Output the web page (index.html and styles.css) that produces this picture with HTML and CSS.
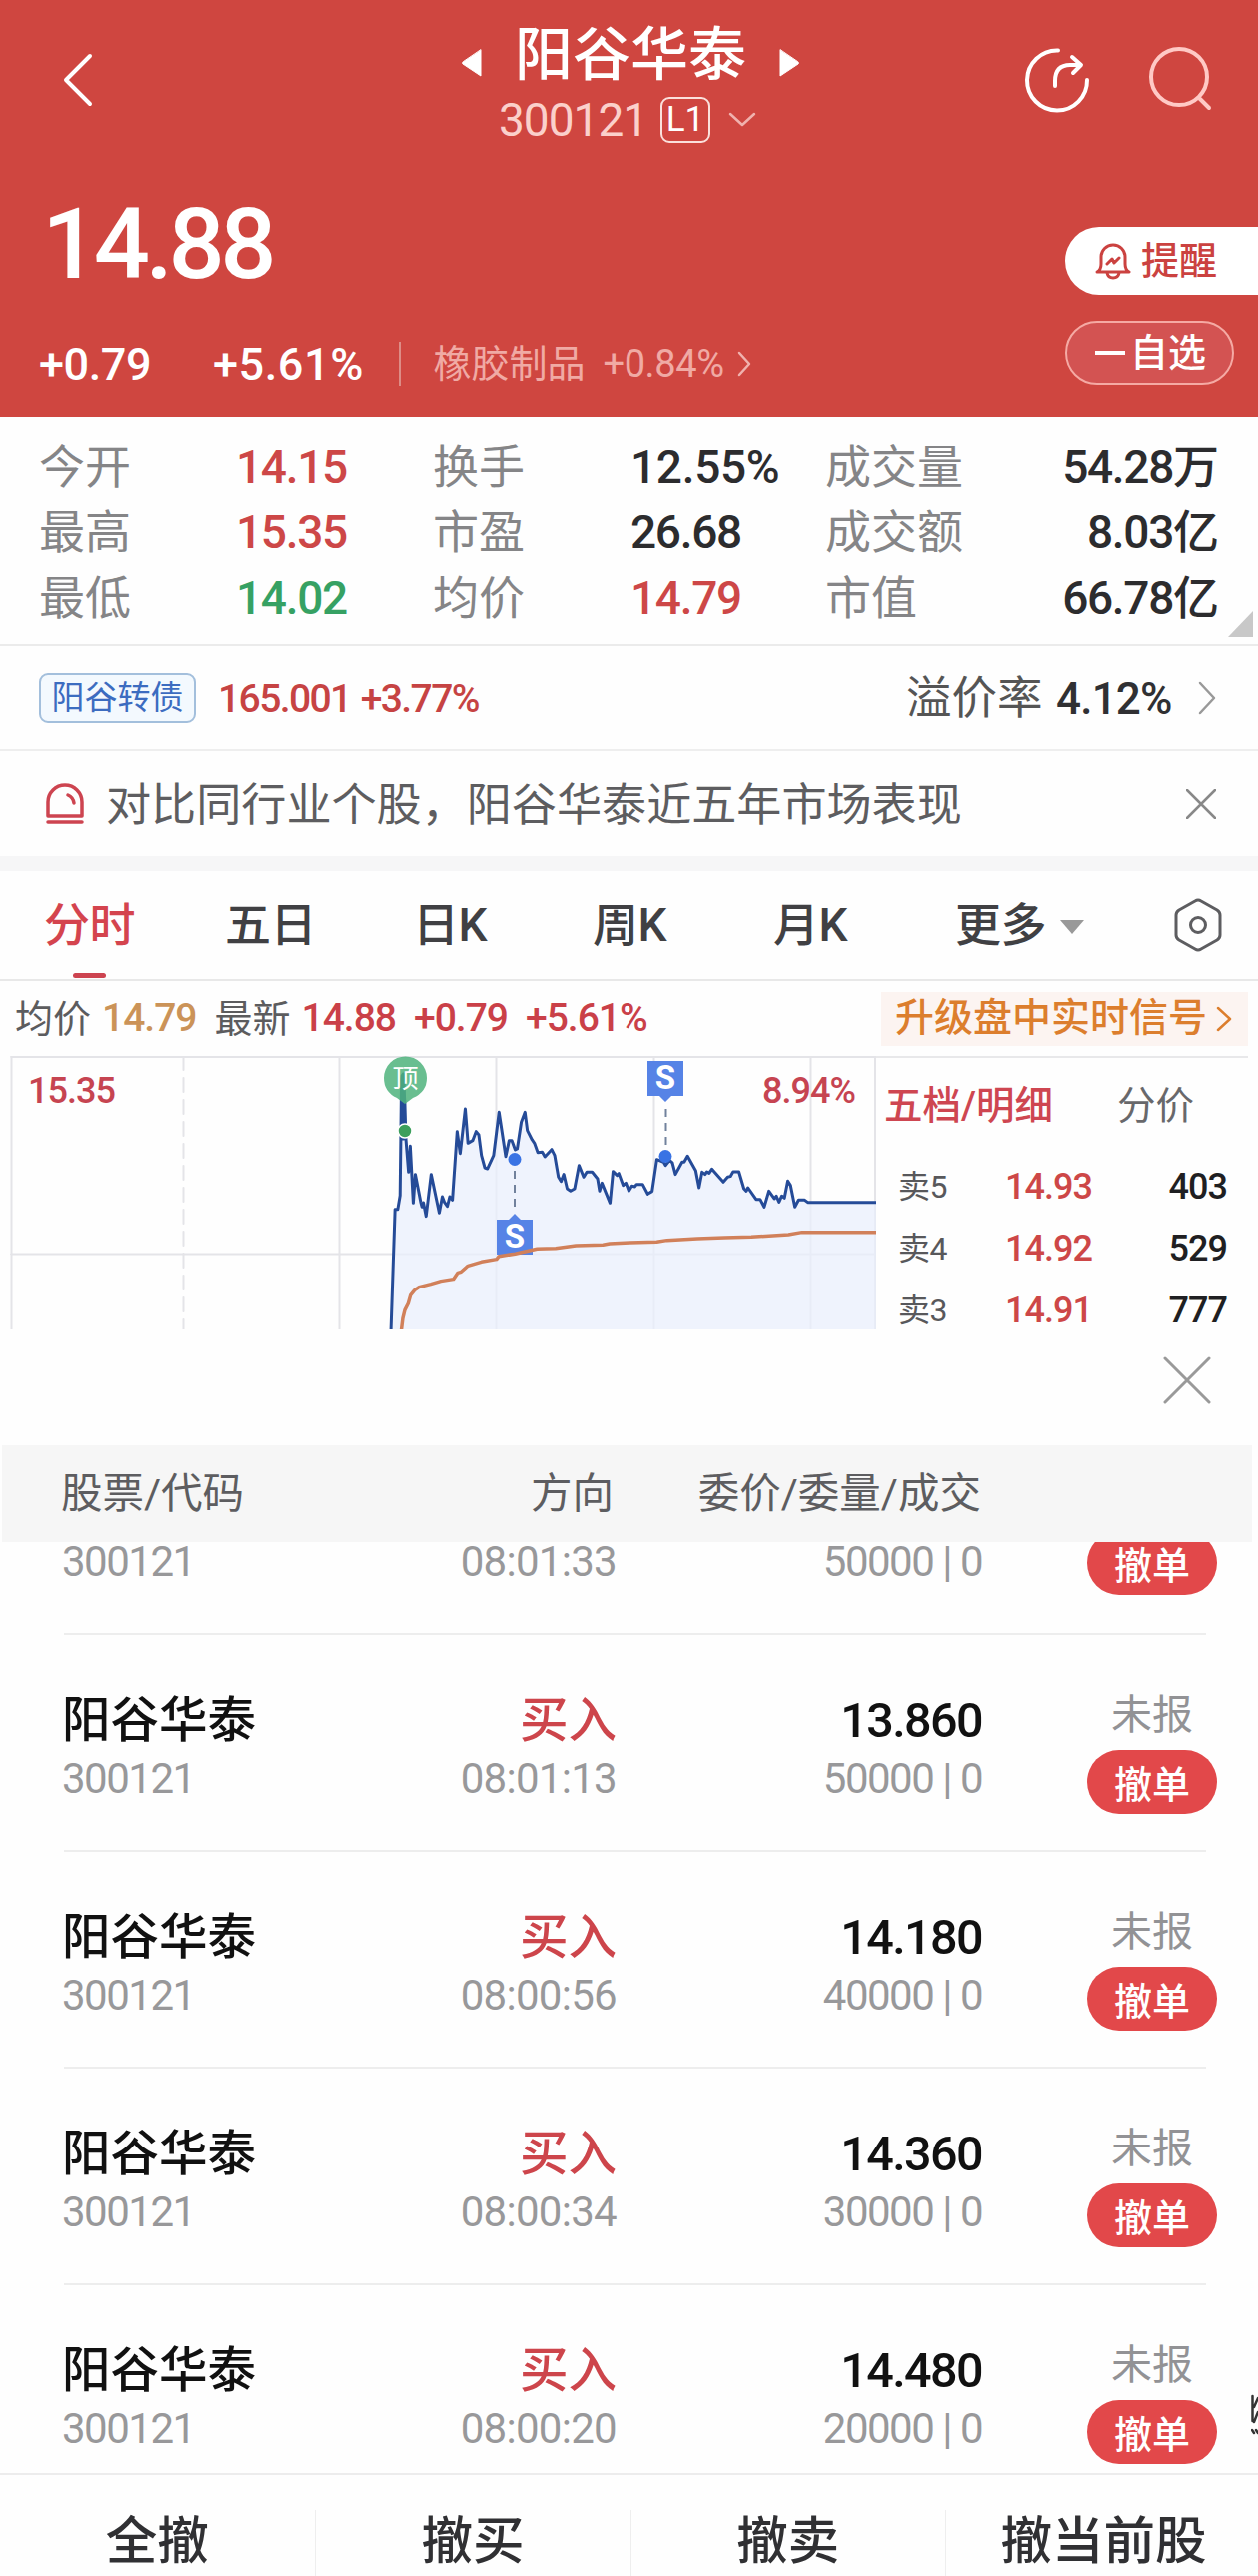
FILE: index.html
```html
<!DOCTYPE html>
<html lang="zh-CN">
<head>
<meta charset="utf-8">
<title>阳谷华泰 300121</title>
<link rel="stylesheet" href="styles.css">
</head>
<body>
<header class="hero">
  <div class="nav">
    <svg class="back" width="34" height="56" viewBox="0 0 34 56"><path d="M29 4 5 28l24 24"/></svg>
    <div class="title">
      <div class="title-row">
        <svg width="22" height="30" viewBox="0 0 22 30"><path class="solid" d="M20 2v26L2 16q-1-1 0-2z"/></svg>
        <h1>阳谷华泰</h1>
        <svg width="22" height="30" viewBox="0 0 22 30"><path class="solid" d="M2 2v26l18-12q1-1 0-2z"/></svg>
      </div>
      <div class="code-row"><span class="code">300121</span><span class="level">L1</span>
        <svg width="28" height="16" viewBox="0 0 28 16"><path class="thin" d="m2 2 12 11L26 2"/></svg>
      </div>
    </div>
    <svg class="share" width="68" height="68" viewBox="0 0 68 68"><path d="M35 3.500A30 30 0 1 0 64 33M32 39v-5q0-16 15-16h10M49 10l9 8-8 8"/></svg>
    <svg class="search" width="66" height="66" viewBox="0 0 66 66"><circle cx="31" cy="31" r="28"/><path d="m52 53 9 9"/></svg>
  </div>
  <div class="quote">
    <div>
      <div class="price">14.88</div>
      <div class="change"><span class="diff">+0.79</span><span class="pct">+5.61%</span><i></i><span class="sector">橡胶制品</span><span class="sector-pct">+0.84%</span>
        <svg width="16" height="28" viewBox="0 0 16 28"><path class="thin" d="m3 3 10 11L3 25"/></svg></div>
    </div>
    <div class="actions">
      <div class="remind"><svg width="36" height="38" viewBox="0 0 36 38"><path d="M2 30q4-2 4-8v-7a12 12 0 0 1 24 0v7q0 6 4 8zM12 31q1 5 6 5t6-5M12 22l5-5 2 4 5-5"/></svg>提醒</div>
      <div class="watch"><b></b>自选</div>
    </div>
  </div>
</header>

<section class="stats">
  <span>今开</span><b class="up">14.15</b><span>换手</span><b class="turnover">12.55%</b><span>成交量</span><b class="end">54.28<em>万</em></b>
  <span>最高</span><b class="up">15.35</b><span>市盈</span><b>26.68</b><span>成交额</span><b class="end">8.03<em>亿</em></b>
  <span>最低</span><b class="down">14.02</b><span>均价</span><b class="up">14.79</b><span>市值</span><b class="end">66.78<em>亿</em></b>
  <i class="corner"></i>
</section>

<section class="bond">
  <span class="tag">阳谷转债</span><span class="bond-num">165.001 +3.77%</span>
  <span class="premium">溢价率</span><b>4.12%</b>
  <svg width="20" height="34" viewBox="0 0 20 34"><path d="m3 2 14 15L3 32"/></svg>
</section>

<section class="notice">
  <svg class="alarm" width="42" height="42" viewBox="0 0 42 42"><path d="M4 33V19a17 17 0 0 1 34 0v14zM4 39h34M24 12q5 2 6 8"/></svg>
  <span>对比同行业个股，阳谷华泰近五年市场表现</span>
  <svg class="shut" width="30" height="30" viewBox="0 0 30 30"><path d="m1 1 28 28M29 1 1 29"/></svg>
</section>

<nav class="tabs">
  <span class="tab active">分时</span><span class="tab">五日</span><span class="tab">日K</span><span class="tab">周K</span><span class="tab">月K</span><span class="tab more">更多<i></i></span>
  <svg width="50" height="54" viewBox="0 0 50 54"><path d="M22 3q3-2 6 0l16 9q3 2 3 5v20q0 3-3 5l-16 9q-3 2-6 0L6 42q-3-2-3-5V17q0-3 3-5z"/><circle cx="25" cy="27" r="7.500"/></svg>
</nav>

<div class="ticker">
  <span class="label">均价</span><span class="avg">14.79</span><span class="label">最新</span><span class="now">14.88</span><span class="now">+0.79</span><span class="now">+5.61%</span>
  <div class="upgrade">升级盘中实时信号<svg width="18" height="28" viewBox="0 0 18 28"><path d="m3 3 12 11L3 25"/></svg></div>
</div>

<section class="market">
  <svg class="chart" width="877" height="274" viewBox="0 1057 877 274">
    <g class="grid">
      <path d="M11 1058H877M11.500 1057v274M339.500 1057v274M496.500 1057v274M654.500 1057v274M811.500 1057v274M876 1057v274M11 1255.500H877"/>
      <path stroke-dasharray="14 8" d="M183.500 1057v274"/>
    </g>
    <g transform="translate(360 1040) scale(.3380 .3333)">
      <path class="area" d="M92 873L104 512 112 512 119 470 121 300 123 120 128 105 133 195 136 300 144 400 149 322 158 493 164 407 180 490 196 533 211 407 235 523 244 474 259 503 266 474 274 484 288 278 297 344 312 210 320 313 334 305 344 278 352 288 360 350 370 387 378 390 396 350 412 220 432 353 442 305 450 305 460 333 466 330 478 250 489 220 496 275 510 303 527 341 548 354 568 332 577 350 588 415 596 428 604 407 614 450 624 457 636 450 649 380 663 415 672 400 688 400 704 420 710 457 717 433 741 493 750 398 762 410 780 440 797 457 820 437 838 437 853 466 866 458 880 362 906 380 918 365 926 372 935 407 955 370 971 352 995 395 1005 447 1014 400 1043 391 1077 430 1106 399 1123 399 1138 450 1150 447 1174 482 1186 482 1198 505 1212 457 1228 480 1242 490 1258 478 1268 427 1276 440 1289 505 1300 484 1318 484 1327 491 1529 491V873z"/>
      <path class="line" d="M92 873L104 512 112 512 119 470 121 300 123 120 128 105 133 195 136 300 144 400 149 322 158 493 164 407 180 490 184 505 188 492 196 533 211 407 235 523 244 474 250 490 259 503 266 474 274 484 288 278 297 344 312 210 320 313 334 305 344 278 352 288 360 350 370 387 378 390 396 350 412 220 432 353 442 305 450 305 460 333 466 330 478 250 489 220 496 275 510 303 517 313 527 341 540 340 548 354 568 332 577 350 588 415 596 428 604 407 614 450 624 457 636 450 649 380 663 415 672 400 688 400 704 420 710 457 717 433 741 493 750 398 762 410 767 404 780 440 788 433 797 457 806 442 815 444 820 437 838 437 853 466 866 458 880 362 900 370 906 380 918 365 926 372 935 407 955 370 961 370 971 352 995 395 1005 447 1014 400 1023 407 1028 399 1035 403 1043 391 1077 430 1090 415 1098 413 1106 399 1123 399 1138 450 1145 457 1150 447 1174 482 1186 482 1198 505 1212 457 1228 480 1234 472 1242 490 1250 472 1258 478 1268 427 1276 440 1289 505 1300 484 1318 484 1327 491 1529 491"/>
      <path class="line spike" d="M124 300V110M130 300V120"/>
    </g>
    <g class="sell">
      <path d="M497 1221h12l6-6 6 6h12v35h-36zM648 1062h36v35h-12l-6 6-6-6h-12z"/>
      <text x="515" y="1249">S</text><text x="666" y="1090">S</text>
      <path class="lead" d="M515 1172v40M666.500 1110v40"/>
      <circle cx="515" cy="1160.500" r="6.500"/><circle cx="666" cy="1157.500" r="6.500"/>
    </g>
    <g transform="translate(360 1040) scale(.3380 .3333)">
      <path class="mean" d="M123 873L127 840 133 815 143 795 150 770 162 755 175 746 210 737 240 728 277 722 290 703 300 700 320 682 360 670 405 662 412 653 460 646 525 631 580 629 640 621 720 619 740 615 800 612 880 610 910 605 1000 600 1080 597 1160 595 1270 588 1310 581 1529 581"/>
    </g>
    <path class="pin" d="M384 1079a21.500 21.500 0 1 1 43 0q0 14-14 20l-8 6-8-6q-13-6-13-20z"/>
    <text class="pin-text" x="405.500" y="1089">顶</text>
    <circle class="top-dot" cx="405" cy="1132" r="7"/>
    <text class="scale" x="28" y="1104">15.35</text><text class="scale" x="763" y="1104">8.94%</text>
  </svg>
  <div class="book">
    <div class="book-tabs"><span class="on">五档/明细</span><span>分价</span></div>
    <div class="level-row"><span>卖5</span><b class="up">14.93</b><b>403</b></div>
    <div class="level-row"><span>卖4</span><b class="up">14.92</b><b>529</b></div>
    <div class="level-row"><span>卖3</span><b class="up">14.91</b><b>777</b></div>
  </div>
</section>

<div class="sheet-top"><svg width="48" height="48" viewBox="0 0 48 48"><path d="m2 2 44 44M46 2 2 46"/></svg></div>
<div class="cols head"><span>股票/代码</span><span>方向</span><span>委价/委量/成交</span><span></span></div>
<main class="orders">
  <div class="order first"><div class="cols"><div><small>300121</small></div><div class="buy"><small>08:01:33</small></div><div class="num"><small>50000 | 0</small></div><div class="act"><button>撤单</button></div></div></div>
  <div class="order"><div class="cols"><div>阳谷华泰<small>300121</small></div><div class="buy">买入<small>08:01:13</small></div><div class="num">13.860<small>50000 | 0</small></div><div class="act">未报<button>撤单</button></div></div></div>
  <div class="order"><div class="cols"><div>阳谷华泰<small>300121</small></div><div class="buy">买入<small>08:00:56</small></div><div class="num">14.180<small>40000 | 0</small></div><div class="act">未报<button>撤单</button></div></div></div>
  <div class="order"><div class="cols"><div>阳谷华泰<small>300121</small></div><div class="buy">买入<small>08:00:34</small></div><div class="num">14.360<small>30000 | 0</small></div><div class="act">未报<button>撤单</button></div></div></div>
  <div class="order last"><div class="cols"><div>阳谷华泰<small>300121</small></div><div class="buy">买入<small>08:00:20</small></div><div class="num">14.480<small>20000 | 0</small></div><div class="act">未报<button>撤单</button></div></div></div>
  <svg class="edge" width="7" height="42" viewBox="0 0 7 42"><path d="M1.500 2v25M7 4 3 13M7 18l-4 10M1 36l2 3M5 36l2 3"/></svg>
</main>
<footer class="bar"><span>全撤</span><span>撤买</span><span>撤卖</span><span>撤当前股</span></footer>
</body>
</html>
```
FILE: styles.css
```css
* { box-sizing: border-box; }
body {
  margin: 0;
  width: 1259px;
  height: 2579px;
  overflow: hidden;
  background: #fefefe;
  color: #303033;
  font-family: Roboto, "Noto Sans CJK SC", sans-serif;
  line-height: 1;
  white-space: nowrap;
}
h1, b, em, i { font-weight: 500; font-style: normal; margin: 0; }
svg { display: block; flex: none; fill: none; stroke-linecap: round; stroke-linejoin: round; }
.up { color: #cd4747 !important; }
.down { color: #36a163 !important; }

/* header */
.hero { height: 417px; background: #cf4640; color: #fff; }
.hero svg { stroke: #fff; stroke-width: 4; }
.hero .solid { fill: #fff; stroke-width: 1; }
.hero .thin { stroke: #f0b2ae; stroke-width: 2.500; }
.nav { height: 160px; display: grid; grid-template-columns: 442px 380px 205px 123px 109px; }
.back { margin: 52px 0 0 61px; }
.title-row { display: flex; align-items: center; justify-content: center; gap: 32px; height: 66px; margin-top: 22px; padding-right: 2px; }
.title-row svg { margin-top: 16px; }
.title h1 { font-size: 58px; line-height: 66px; }
.code-row { display: flex; align-items: center; height: 48px; margin-top: 8px; padding-left: 57px; }
.code { font-size: 46px; letter-spacing: -1px; color: #fbd0cb; width: 162px; }
.level { width: 50px; height: 46px; border: 2.500px solid #fbe0dc; border-radius: 9px; font-size: 35px; line-height: 42px; text-align: center; margin-right: 18px; }
.nav .share { justify-self: end; margin: 47px -65px 0 0; }
.nav .search { justify-self: end; margin: 46px -65px 0 0; stroke: #ffc9c5; }
.quote { display: flex; justify-content: space-between; }
.price { font-size: 99px; font-weight: 500; letter-spacing: -4.500px; margin: 35px 0 0 42px; height: 99px; }
.change { display: flex; align-items: center; height: 50px; margin-top: 45px; padding-left: 39px; font-size: 45px; font-weight: 500; }
.diff { width: 174px; letter-spacing: -.4px; }
.pct { width: 186px; letter-spacing: .6px; }
.change i { width: 1.500px; height: 44px; background: #dd8c86; margin-right: 33px; }
.sector { font-size: 38px; width: 170px; color: #f0aaa4; font-weight: 400; }
.sector-pct { font-size: 38px; width: 133px; color: #f0aaa4; letter-spacing: -.4px; font-weight: 400; }
.actions { padding-top: 67px; width: 193px; }
.remind { height: 68px; border-radius: 34px 0 0 34px; background: #fff; color: #cb4240; display: flex; align-items: center; padding-left: 30px; gap: 10px; font-size: 38px; font-weight: 500; }
.remind svg { stroke: #cb4240; stroke-width: 3; }
.watch { margin-top: 26px; width: 169px; height: 64px; border-radius: 32px; border: 2px solid #f5aaa4; background: #d35352; display: flex; align-items: center; padding-left: 28px; font-size: 38px; font-weight: 500; }
.watch b { width: 30px; height: 4px; background: #fff; margin-right: 5px; }

/* key figures */
.stats { position: relative; height: 230px; border-bottom: 2px solid #ebebeb; display: grid; grid-template-columns: 197px 197px 198px 195px 170px 224px; grid-template-rows: repeat(3, 65.500px); padding: 18px 0 0 39px; align-items: center; font-size: 46px; }
.stats span { color: #858587; }
.stats b { font-size: 46px; letter-spacing: -1.300px; color: #2c2c2e; }
.stats .turnover { letter-spacing: -.3px; }
.stats .end { text-align: right; }
.stats em { letter-spacing: 0; font-size: 46px; }
.corner { position: absolute; right: 5px; bottom: 7px; border-left: 25px solid transparent; border-bottom: 26px solid #c8c8c8; }
.bond { height: 105px; display: flex; align-items: center; border-bottom: 2px solid #eee; padding: 0 39px; }
.tag { width: 157px; height: 50px; border: 2px solid #a3bfdc; border-radius: 9px; background: #f3f9fe; color: #3c6cc0; font-size: 33px; line-height: 46px; text-align: center; }
.bond-num { margin: 3px 0 0 22px; font-size: 39px; letter-spacing: -1.600px; word-spacing: 2px; color: #c64343; font-weight: 500; width: 689px; }
.premium { font-size: 45.500px; color: #555; width: 150px; margin-top: 3px; }
.bond b { font-size: 44px; letter-spacing: -.8px; width: 141px; margin-top: 3px; }
.bond svg { stroke: #999; stroke-width: 2.500; }
.notice { height: 105px; display: flex; align-items: center; padding-left: 44px; font-size: 45.100px; color: #5d5d60; }
.notice span { margin-top: 4px; }
.notice .alarm { stroke: #cd4450; stroke-width: 3.500; margin-right: 20px; }
.notice .shut { stroke: #888; stroke-width: 2.500; margin-left: auto; margin-right: 42px; }

/* period tabs */
.tabs { display: flex; height: 125px; border-top: 15px solid #f6f6f7; border-bottom: 2px solid #e8e8e8; align-items: center; padding-left: 44px; font-size: 46px; font-weight: 500; color: #404043; }
.tab { width: 181px; height: 108px; line-height: 109px; position: relative; letter-spacing: -.5px; }
.tab:nth-child(2) { width: 188px; }
.tab:nth-child(3) { width: 180px; }
.tab:nth-child(4) { width: 181px; }
.tab:nth-child(5) { width: 182px; }
.tab.more { width: 218px; display: flex; align-items: center; }
.more i { border: 12px solid transparent; border-top: 14px solid #999; border-bottom: 0; margin: 4px 0 0 14px; }
.active { color: #d4444e; }
.active::after { content: ""; position: absolute; left: 29px; bottom: 1px; width: 33px; height: 5px; border-radius: 3px; background: #cd4450; }
.tabs svg { stroke: #5d5d60; stroke-width: 3; }
.ticker { height: 75px; display: flex; align-items: center; padding-left: 15px; font-size: 39px; letter-spacing: -1px; font-weight: 500; }
.ticker span { margin-right: 18px; color: #ca4048; }
.ticker .label { font-size: 38px; letter-spacing: 0; color: #5c5c5e; font-weight: 400; margin-right: 11px; }
.ticker .avg { color: #cb9358; margin-right: 18px; }
.upgrade { margin-left: auto; margin-right: 10px; width: 367px; height: 54px; padding-left: 14px; display: flex; align-items: center; gap: 8px; background: #fcf4f1; color: #dc7e2d; letter-spacing: 0; font-size: 39px; }
.upgrade svg { stroke: #dc7e2d; stroke-width: 2.500; }

/* intraday chart and order book */
.market { display: flex; height: 274px; }
.chart .grid { stroke: #e4e4e8; stroke-width: 2; }
.area { fill: #e9effc; fill-opacity: .75; }
.line, .mean { vector-effect: non-scaling-stroke; stroke-width: 3; stroke: #254b98; }
.mean { stroke: #d1805a; stroke-width: 3.500; }
.sell { fill: #5683e6; }
.sell circle { fill: #3973e4; }
.sell .lead { stroke: #71819c; stroke-width: 2; stroke-dasharray: 8 6; stroke-linecap: butt; }
.sell text { fill: #fff; font-size: 33px; font-weight: 700; text-anchor: middle; }
.pin { fill: #4fb37d; fill-opacity: .85; }
.pin-text { fill: #fff; font-size: 26px; text-anchor: middle; }
.top-dot { fill: #3c9f5c; stroke: #fff; stroke-width: 1.500; }
.scale { fill: #c64451; font-size: 36px; font-weight: 500; letter-spacing: -1px; }
.book { width: 372px; border-top: 2px solid #e8e8ea; padding: 20px 0 0 8px; }
.book-tabs { display: flex; height: 56px; line-height: 56px; font-size: 38.500px; color: #68686b; margin-bottom: 22px; }
.book-tabs .on { color: #ce4651; width: 233px; font-weight: 500; }
.level-row { display: grid; grid-template-columns: 107px 121px 101px; height: 62px; align-items: center; padding-left: 14px; font-size: 36px; }
.level-row span { font-size: 32px; color: #58585b; letter-spacing: -.5px; }
.level-row b { letter-spacing: -1px; color: #1f1f22; }
.level-row b:last-child { text-align: right; }

/* pending orders */
.sheet-top { height: 116px; padding: 27px 47px 0 0; display: flex; justify-content: flex-end; }
.sheet-top svg { stroke: #999; stroke-width: 3; }
.cols { display: grid; grid-template-columns: 300px 255px 367px 235px; }
.cols > :nth-child(2), .cols > :nth-child(3) { text-align: right; }
.head { margin: 0 6px 0 2px; height: 97px; padding-left: 59px; background: #f6f6f6; color: #5d5d60; font-size: 41.500px; align-items: center; line-height: 60px; grid-template-columns: 300px 253px 368px 234px; }
.orders { position: relative; height: 932px; overflow: hidden; display: flex; flex-direction: column; justify-content: flex-end; }
.order { height: 217px; flex: none; margin: 0 52px 0 64px; border-bottom: 2px solid #ededed; color: #111; font-size: 48.500px; }
.order.first { height: 93px; }
.order.last { height: 188px; border: 0; }
.order .cols { margin-left: -2px; padding-top: 54px; font-weight: 500; line-height: 64px; }
.order.first .cols { padding-top: 0; }
.order.first small { margin-top: -6px; }
.order.first button { margin-top: -11px; }
.order small { display: block; font-size: 42px; line-height: 52px; letter-spacing: -1.500px; color: #98989a; font-weight: 400; }
.buy small { letter-spacing: -.7px; }
.buy { color: #cd454b; }
.num { letter-spacing: -1.600px; padding-right: 1px; }
.act { padding-left: 104px; width: 234px; font-size: 41px; color: #929295; font-weight: 400; line-height: 52px; text-align: center; }
.order button { display: block; margin: 9px 0 0; width: 130px; height: 64px; border: 0; border-radius: 32px; background: #e2484a; color: #fff; font: 500 38px/60px "Noto Sans CJK SC", sans-serif; padding: 0; }
.edge { position: absolute; right: 0; top: 853px; stroke: #333; stroke-width: 2.500; }
.bar { height: 103px; width: 1263px; border-top: 2px solid #ececec; display: grid; grid-template-columns: repeat(4, 1fr); padding-top: 35px; font-size: 51.500px; font-weight: 500; line-height: 64px; text-align: center; }
.bar span { border-right: 1.500px solid #eee; }
```
